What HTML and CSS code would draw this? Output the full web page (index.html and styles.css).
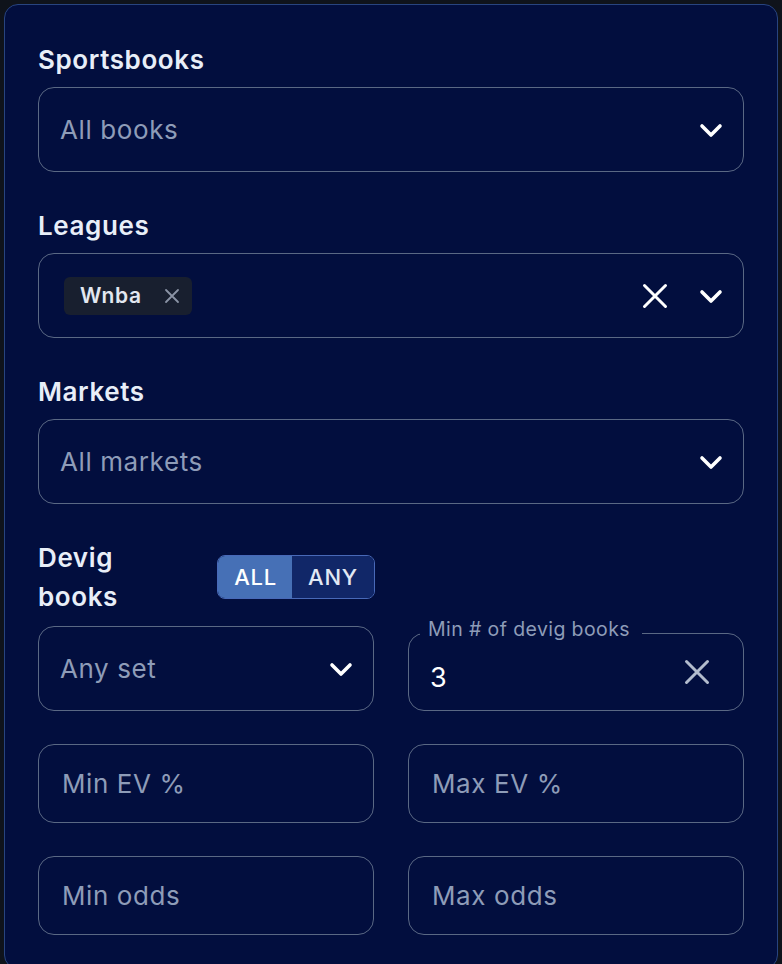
FILE: index.html
```html
<!DOCTYPE html>
<html lang="en">
<head>
<meta charset="utf-8">
<title>Filters</title>
<link rel="stylesheet" href="styles.css">
</head>
<body>
<div class="card">
  <div class="field">
    <div class="label">Sportsbooks</div>
    <div class="select">
      <span class="placeholder">All books</span>
      <span class="icons">
        <svg class="chev" width="24" height="24" viewBox="0 0 24 24"><path d="M3 8l9 9 9-9"/></svg>
      </span>
    </div>
  </div>

  <div class="field">
    <div class="label">Leagues</div>
    <div class="select">
      <span class="chip">Wnba
        <svg class="chip-x" width="16" height="16" viewBox="0 0 16 16"><path d="M2 2L14 14M14 2L2 14"/></svg>
      </span>
      <span class="icons">
        <svg class="bigx" width="26" height="26" viewBox="0 0 26 26"><path d="M2.5 2.5L23.5 23.5M23.5 2.5L2.5 23.5"/></svg>
        <svg class="chev" width="24" height="24" viewBox="0 0 24 24"><path d="M3 8l9 9 9-9"/></svg>
      </span>
    </div>
  </div>

  <div class="field">
    <div class="label">Markets</div>
    <div class="select">
      <span class="placeholder">All markets</span>
      <span class="icons">
        <svg class="chev" width="24" height="24" viewBox="0 0 24 24"><path d="M3 8l9 9 9-9"/></svg>
      </span>
    </div>
  </div>

  <div class="grid">
    <div class="devig">
      <div class="devig-head">
        <div class="label narrow">Devig books</div>
        <div class="toggle">
          <span class="seg on">ALL</span>
          <span class="seg">ANY</span>
        </div>
      </div>
      <div class="select">
        <span class="placeholder">Any set</span>
        <span class="icons">
          <svg class="chev" width="24" height="24" viewBox="0 0 24 24"><path d="M3 8l9 9 9-9"/></svg>
        </span>
      </div>
    </div>

    <div class="textfield">
      <span class="float-label">Min # of devig books</span>
      <span class="value">3</span>
      <svg class="clear" width="26" height="26" viewBox="0 0 26 26"><path d="M2.5 2.5L23.5 23.5M23.5 2.5L2.5 23.5"/></svg>
    </div>

    <div class="input"><span class="placeholder">Min EV %</span></div>
    <div class="input"><span class="placeholder">Max EV %</span></div>
    <div class="input"><span class="placeholder">Min odds</span></div>
    <div class="input"><span class="placeholder">Max odds</span></div>
  </div>
</div>
</body>
</html>
```

FILE: styles.css
```css
* { box-sizing: border-box; }
html, body { margin: 0; padding: 0; }
body {
  background: #0f131b;
  font-family: Inter, "Noto Sans", "Liberation Sans", sans-serif;
  color: #e8eef8;
}
.card {
  margin: 4px 4px 0 4px;
  border: 1px solid #28447f;
  border-radius: 14px;
  background: #020e3e;
  padding: 35px 33px 33px 33px;
  display: flex;
  flex-direction: column;
  gap: 34px;
}
.field {
  display: flex;
  flex-direction: column;
  gap: 8px;
}
.label {
  font-size: 26px;
  line-height: 39px;
  font-weight: 600;
  letter-spacing: 0.6px;
  color: #e8eef8;
}
.label.narrow { width: 130px; }
.select {
  height: 85px;
  border: 1.5px solid #5a6884;
  border-radius: 16px;
  display: flex;
  align-items: center;
  justify-content: space-between;
  padding: 0 20px 0 21px;
}
.placeholder {
  font-size: 26px;
  letter-spacing: 0.6px;
  color: #8e9cb8;
}
.icons {
  display: flex;
  align-items: center;
  gap: 31px;
}
.chev path {
  fill: none;
  stroke: #ffffff;
  stroke-width: 3.6;
  stroke-linecap: round;
  stroke-linejoin: round;
}
.bigx path, .clear path {
  fill: none;
  stroke: #ffffff;
  stroke-width: 3;
  stroke-linecap: round;
}
.clear path { stroke: #b3bccd; }
.chip {
  display: inline-flex;
  align-items: center;
  gap: 22px;
  height: 38px;
  padding: 0 12px 0 16px;
  margin-left: 4px;
  border-radius: 6px;
  background: #181f2f;
  font-size: 21px;
  font-weight: 600;
  letter-spacing: 0.7px;
  color: #e2e7f0;
}
.chip-x path {
  fill: none;
  stroke: #8a93a5;
  stroke-width: 1.8;
  stroke-linecap: round;
}
.grid {
  display: grid;
  grid-template-columns: 1fr 1fr;
  column-gap: 34px;
  row-gap: 33px;
}
.devig {
  display: flex;
  flex-direction: column;
  gap: 10px;
}
.devig-head {
  display: flex;
  align-items: center;
  justify-content: space-between;
}
.toggle {
  display: flex;
  height: 44px;
  border: 1.5px solid #4869b8;
  border-radius: 8px;
  overflow: hidden;
  margin-right: -1px;
}
.seg {
  display: flex;
  align-items: center;
  padding: 0 16px;
  font-size: 22px;
  font-weight: 500;
  letter-spacing: 0.8px;
  background: #112768;
  color: #e1e8f4;
}
.seg.on {
  background: #4670b6;
  color: #ffffff;
  padding: 0 15px 0 16px;
}
.textfield {
  position: relative;
  align-self: end;
  height: 78px;
  border: 1.5px solid #5a6884;
  border-radius: 16px;
  display: flex;
  align-items: center;
  justify-content: space-between;
  padding: 0 33px 0 21px;
}
.float-label {
  position: absolute;
  top: -17px;
  left: 11px;
  padding: 0 12px 0 8px;
  background: #020e3e;
  font-size: 19.5px;
  line-height: 24px;
  letter-spacing: 0.4px;
  color: #8e9cb8;
}
.value {
  font-size: 27px;
  color: #ffffff;
  margin-top: 11px;
}
.input {
  height: 79px;
  border: 1.5px solid #5a6884;
  border-radius: 16px;
  display: flex;
  align-items: center;
  padding: 0 22px 0 23px;
}
```
